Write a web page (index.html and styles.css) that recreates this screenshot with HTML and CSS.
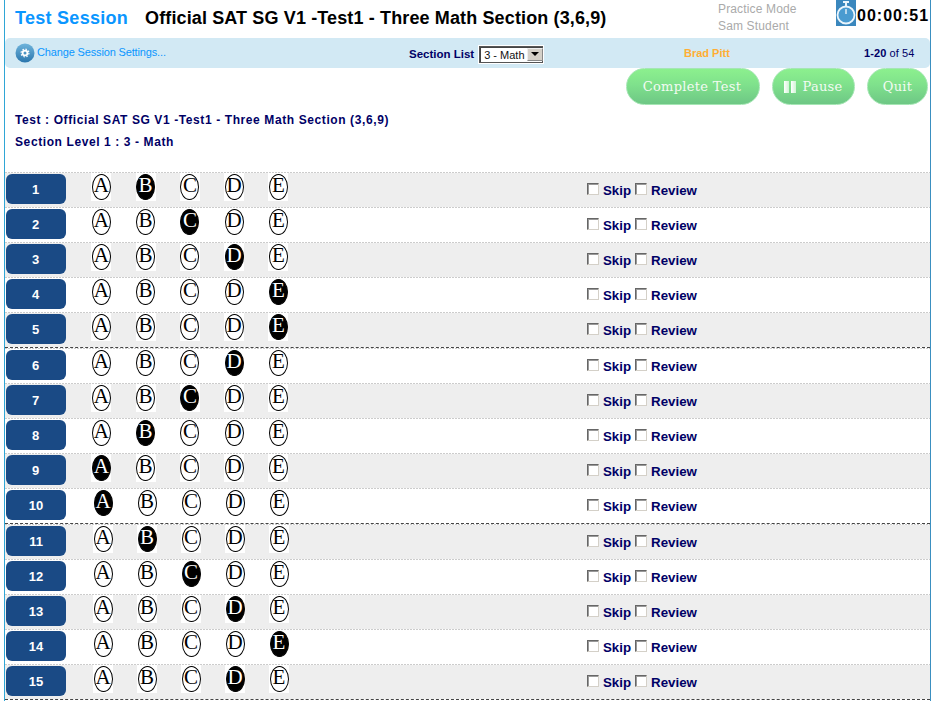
FILE: index.html
```html
<!DOCTYPE html>
<html lang="en">
<head>
<meta charset="utf-8">
<title>Test Session</title>
<link rel="stylesheet" href="styles.css">
</head>
<body>
<div class="page">
  <header class="head">
    <h1 class="brand">Test Session</h1>
    <h2 class="title">Official SAT SG V1 -Test1 - Three Math Section (3,6,9)</h2>
    <div class="mode"><div>Practice Mode</div><div>Sam Student</div></div>
    <div class="timer">
      <svg class="watch" width="20" height="26" viewBox="0 0 20 26"><rect width="20" height="26" fill="#3a87bd"/><rect x="7" y="1" width="6" height="2" fill="#e8f4fb"/><rect x="9" y="3" width="2" height="3" fill="#e8f4fb"/><circle cx="10" cy="15" r="8.500" fill="#4a9bd0" stroke="#eaf5fc" stroke-width="1.800"/><rect x="9.400" y="9" width="1.200" height="5" fill="#fff"/></svg>
      <span class="clock">00:00:51</span>
    </div>
  </header>
  <div class="bar">
    <div class="settings">
      <svg width="20" height="20" viewBox="0 0 20 20"><defs><linearGradient id="g" x1="0" y1="0" x2="0" y2="1"><stop offset="0" stop-color="#6fb4dc"/><stop offset="1" stop-color="#2a76ad"/></linearGradient></defs><circle cx="10" cy="10" r="9.500" fill="url(#g)"/><circle cx="10" cy="10" r="2.400" fill="none" stroke="#fff" stroke-width="1.800"/><circle cx="10" cy="10" r="3.900" fill="none" stroke="#fff" stroke-width="1.200" stroke-dasharray="1.500 1.560"/></svg>
      <a class="settings-link">Change Session Settings...</a>
    </div>
    <div class="section"><label class="section-label">Section List</label>
      <div class="select"><span class="select-val">3 - Math</span><span class="select-btn"><i class="arrow"></i></span></div>
    </div>
    <div class="student">Brad Pitt</div>
    <div class="range"><b>1-20</b> of 54</div>
  </div>
  <div class="actions">
    <button class="btn btn-complete">Complete Test</button>
    <button class="btn btn-pause"><i class="pause"><i class="pbar"></i><i class="pbar"></i></i>Pause</button>
    <button class="btn btn-quit">Quit</button>
  </div>
  <div class="info">
    <p class="info-line">Test : Official SAT SG V1 -Test1 - Three Math Section (3,6,9)</p>
    <p class="info-line">Section Level 1 : 3 - Math</p>
  </div>
  <div class="sheet" id="sheet">
    <section class="group">
      <div class="row"><div class="num">1</div><div class="opts"><span class="b"><span class="o">A</span></span><span class="b"><span class="o on">B</span></span><span class="b"><span class="o">C</span></span><span class="b"><span class="o">D</span></span><span class="b"><span class="o">E</span></span></div><div class="marks"><i class="cb"></i><span class="lab">Skip</span><i class="cb"></i><span class="lab">Review</span></div></div>
      <div class="row"><div class="num">2</div><div class="opts"><span class="b"><span class="o">A</span></span><span class="b"><span class="o">B</span></span><span class="b"><span class="o on">C</span></span><span class="b"><span class="o">D</span></span><span class="b"><span class="o">E</span></span></div><div class="marks"><i class="cb"></i><span class="lab">Skip</span><i class="cb"></i><span class="lab">Review</span></div></div>
      <div class="row"><div class="num">3</div><div class="opts"><span class="b"><span class="o">A</span></span><span class="b"><span class="o">B</span></span><span class="b"><span class="o">C</span></span><span class="b"><span class="o on">D</span></span><span class="b"><span class="o">E</span></span></div><div class="marks"><i class="cb"></i><span class="lab">Skip</span><i class="cb"></i><span class="lab">Review</span></div></div>
      <div class="row"><div class="num">4</div><div class="opts"><span class="b"><span class="o">A</span></span><span class="b"><span class="o">B</span></span><span class="b"><span class="o">C</span></span><span class="b"><span class="o">D</span></span><span class="b"><span class="o on">E</span></span></div><div class="marks"><i class="cb"></i><span class="lab">Skip</span><i class="cb"></i><span class="lab">Review</span></div></div>
      <div class="row"><div class="num">5</div><div class="opts"><span class="b"><span class="o">A</span></span><span class="b"><span class="o">B</span></span><span class="b"><span class="o">C</span></span><span class="b"><span class="o">D</span></span><span class="b"><span class="o on">E</span></span></div><div class="marks"><i class="cb"></i><span class="lab">Skip</span><i class="cb"></i><span class="lab">Review</span></div></div>
    </section>
    <section class="group">
      <div class="row even"><div class="num">6</div><div class="opts"><span class="b"><span class="o">A</span></span><span class="b"><span class="o">B</span></span><span class="b"><span class="o">C</span></span><span class="b"><span class="o on">D</span></span><span class="b"><span class="o">E</span></span></div><div class="marks"><i class="cb"></i><span class="lab">Skip</span><i class="cb"></i><span class="lab">Review</span></div></div>
      <div class="row odd"><div class="num">7</div><div class="opts"><span class="b"><span class="o">A</span></span><span class="b"><span class="o">B</span></span><span class="b"><span class="o on">C</span></span><span class="b"><span class="o">D</span></span><span class="b"><span class="o">E</span></span></div><div class="marks"><i class="cb"></i><span class="lab">Skip</span><i class="cb"></i><span class="lab">Review</span></div></div>
      <div class="row even"><div class="num">8</div><div class="opts"><span class="b"><span class="o">A</span></span><span class="b"><span class="o on">B</span></span><span class="b"><span class="o">C</span></span><span class="b"><span class="o">D</span></span><span class="b"><span class="o">E</span></span></div><div class="marks"><i class="cb"></i><span class="lab">Skip</span><i class="cb"></i><span class="lab">Review</span></div></div>
      <div class="row odd"><div class="num">9</div><div class="opts"><span class="b"><span class="o on">A</span></span><span class="b"><span class="o">B</span></span><span class="b"><span class="o">C</span></span><span class="b"><span class="o">D</span></span><span class="b"><span class="o">E</span></span></div><div class="marks"><i class="cb"></i><span class="lab">Skip</span><i class="cb"></i><span class="lab">Review</span></div></div>
      <div class="row even two"><div class="num">10</div><div class="opts"><span class="b"><span class="o on">A</span></span><span class="b"><span class="o">B</span></span><span class="b"><span class="o">C</span></span><span class="b"><span class="o">D</span></span><span class="b"><span class="o">E</span></span></div><div class="marks"><i class="cb"></i><span class="lab">Skip</span><i class="cb"></i><span class="lab">Review</span></div></div>
    </section>
    <section class="group">
      <div class="row odd two"><div class="num">11</div><div class="opts"><span class="b"><span class="o">A</span></span><span class="b"><span class="o on">B</span></span><span class="b"><span class="o">C</span></span><span class="b"><span class="o">D</span></span><span class="b"><span class="o">E</span></span></div><div class="marks"><i class="cb"></i><span class="lab">Skip</span><i class="cb"></i><span class="lab">Review</span></div></div>
      <div class="row even two"><div class="num">12</div><div class="opts"><span class="b"><span class="o">A</span></span><span class="b"><span class="o">B</span></span><span class="b"><span class="o on">C</span></span><span class="b"><span class="o">D</span></span><span class="b"><span class="o">E</span></span></div><div class="marks"><i class="cb"></i><span class="lab">Skip</span><i class="cb"></i><span class="lab">Review</span></div></div>
      <div class="row odd two"><div class="num">13</div><div class="opts"><span class="b"><span class="o">A</span></span><span class="b"><span class="o">B</span></span><span class="b"><span class="o">C</span></span><span class="b"><span class="o on">D</span></span><span class="b"><span class="o">E</span></span></div><div class="marks"><i class="cb"></i><span class="lab">Skip</span><i class="cb"></i><span class="lab">Review</span></div></div>
      <div class="row even two"><div class="num">14</div><div class="opts"><span class="b"><span class="o">A</span></span><span class="b"><span class="o">B</span></span><span class="b"><span class="o">C</span></span><span class="b"><span class="o">D</span></span><span class="b"><span class="o on">E</span></span></div><div class="marks"><i class="cb"></i><span class="lab">Skip</span><i class="cb"></i><span class="lab">Review</span></div></div>
      <div class="row odd two"><div class="num">15</div><div class="opts"><span class="b"><span class="o">A</span></span><span class="b"><span class="o">B</span></span><span class="b"><span class="o">C</span></span><span class="b"><span class="o on">D</span></span><span class="b"><span class="o">E</span></span></div><div class="marks"><i class="cb"></i><span class="lab">Skip</span><i class="cb"></i><span class="lab">Review</span></div></div>
    </section>
  </div>
</div>
</body>
</html>
```
FILE: styles.css
```css
* { box-sizing: border-box; }
html, body { margin: 0; padding: 0; height: 701px; overflow: hidden; background: #fff; }
body { font-family: "Liberation Sans", Arial, sans-serif; }
.page { margin-left: 4px; width: 927px; height: 701px; border-left: 1px solid #2fa6d6; border-right: 1px solid #3a8fc0; overflow: hidden; }

.head { height: 38px; display: flex; align-items: flex-start; position: relative; }
.brand { margin: 7px 0 0 10px; width: 130px; font-size: 18px; line-height: 22px; letter-spacing: .28px; color: #0a96ff; font-weight: bold; }
.title { margin: 7px 0 0; width: 573px; font-size: 18px; line-height: 22px; letter-spacing: .13px; color: #000; font-weight: bold; white-space: nowrap; }
.mode { width: 118px; padding-top: 1px; font-size: 12px; line-height: 17px; letter-spacing: .15px; color: #aaa; }
.timer { display: flex; align-items: flex-start; }
.watch { display: block; }
.clock { margin: 6px 0 0 1px; font-size: 16px; line-height: 19px; font-weight: bold; letter-spacing: 1px; color: #000; }

.bar { height: 30px; background: #d2e9f4; border-radius: 5px; display: flex; align-items: center; position: relative; }
.settings { width: 404px; padding-left: 10px; display: flex; align-items: center; }
.settings-link { margin: -3px 0 0 2px; font-size: 11px; color: #0a96ff; letter-spacing: -.15px; white-space: nowrap; }
.section { width: 275px; display: flex; align-items: center; }
.section-label { margin-top: 2px; font-size: 11.500px; font-weight: bold; color: #000066; white-space: nowrap; }
.select { margin: 2px 0 0 4px; width: 66px; height: 19px; background: #fff; border: 1px solid #fff; box-shadow: inset 0 0 0 1px #555, inset 1px 1px 0 1px #444; display: flex; justify-content: space-between; align-items: stretch; }
.select-val { padding: 2px 0 0 5px; font-size: 11px; line-height: 14px; color: #111; white-space: nowrap; }
.select-btn { flex: none; width: 16px; margin: 2px; background: #d4d0c8; border: 1px solid #888; border-top-color: #eee; border-left-color: #eee; display: flex; align-items: center; justify-content: center; }
.arrow { width: 0; height: 0; border: 4px solid transparent; border-top-color: #000; border-bottom: 0; }
.student { width: 180px; font-size: 11px; font-weight: bold; color: #ffae33; margin-top: -1px; }
.range { font-size: 11px; color: #000066; margin-top: -1px; letter-spacing: .1px; }

.actions { height: 38px; padding: 0 2px 0 0; display: flex; justify-content: flex-end; gap: 12px; }
.btn { height: 37px; border: 1px solid #a5e6b4; border-radius: 19px; background: linear-gradient(#8cf08e, #7fe18c 45%, #6ec785); color: #f2fbf2; font-family: "DejaVu Serif", "Liberation Serif", serif; font-size: 13px; font-weight: normal; letter-spacing: .3px; padding: 0; display: flex; align-items: center; justify-content: center; }
.btn-complete { width: 134px; padding-right: 2px; }
.btn-pause { width: 83px; }
.btn-quit { width: 61px; }
.pause { display: flex; gap: 2px; margin-right: 6px; }
.pbar { width: 5px; height: 12px; background: linear-gradient(90deg, #fff, #d0f4d4); }

.info { height: 66px; padding: 6px 0 0 10px; }
.info-line { margin: 0 0 6px; font-size: 12px; line-height: 16px; font-weight: bold; letter-spacing: .6px; color: #000066; }

.group { border-bottom: 1px dashed #444; }
.group:first-child .row:nth-child(odd), .row.odd { background: #eee; }
.row { height: 35px; border-top: 1px solid #ccc; border-image: repeating-linear-gradient(90deg, #ccc 0 2px, #fff 2px 3px) 1 0 0 0; padding: 1px 0 3px 1px; display: flex; align-items: flex-start; }
.num { width: 60px; height: 30px; padding-right: 1px; border-radius: 6px; background: #1a4a85; color: #fff; font-size: 13px; font-weight: bold; line-height: 31px; text-align: center; }
.opts { width: 521px; padding-left: 25.300px; display: flex; align-items: flex-start; }
.two .opts { padding-left: 27px; }
.two .num { padding-right: 0; }
.b { width: 20px; height: 28px; margin-top: -1px; margin-right: 24.300px; background: #fff; display: flex; justify-content: center; padding-top: 1px; }
.two .b { margin-right: 24px; }
.o { width: 19px; height: 26px; border: 1px solid #000; border-radius: 50%; background: #fff; font-family: "Liberation Serif", "Times New Roman", serif; font-size: 21px; line-height: 20px; text-align: center; color: #000; }
.o.on { background: #000; color: #fff; font-weight: normal; }

.marks { display: flex; align-items: flex-start; padding-top: 9px; }
.cb { width: 12px; height: 12px; margin-right: 4px; background: #fff; border: 1px solid; border-color: #666 #d4d0c8 #d4d0c8 #666; box-shadow: inset 1px 1px 0 #999; }
.lab { font-size: 13.300px; line-height: 15px; font-weight: bold; color: #000066; margin-right: 4px; }
```
